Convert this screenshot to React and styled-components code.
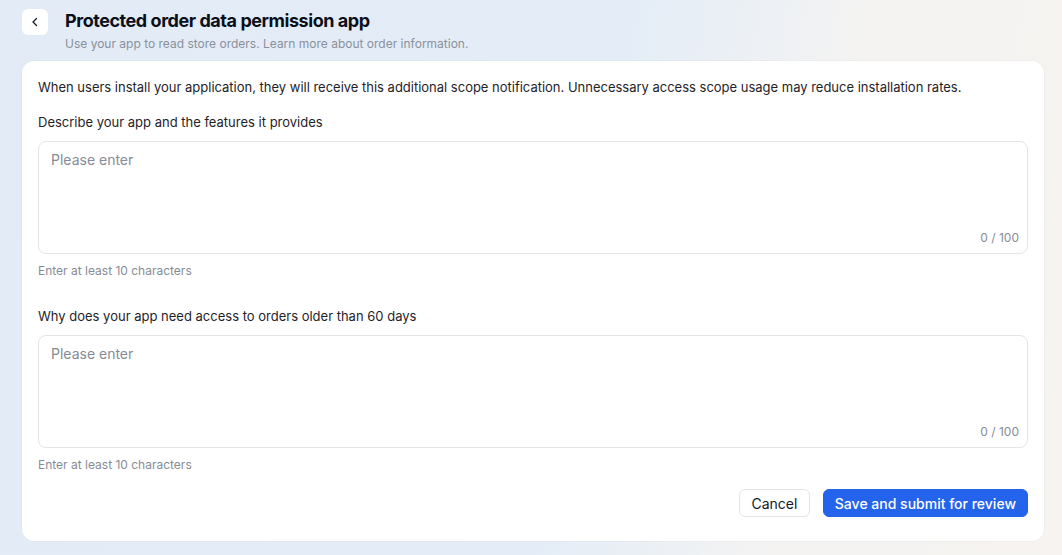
import React from 'react'
import styled, { createGlobalStyle } from 'styled-components'

const GlobalStyle = createGlobalStyle`
  html, body {
    margin: 0;
    padding: 0;
  }
  body {
    font-family: Inter, "Noto Sans", sans-serif;
    color: #111827;
    background: linear-gradient(100deg, #e2ebf6 0%, #e4edf7 55%, #f4f3f2 75%, #f6f3f0 100%);
    min-height: 555px;
  }
`

const Page = styled.div`
  padding: 9px 18px 14px 22px;
  min-height: 555px;
  box-sizing: border-box;
`

const Header = styled.div`
  display: flex;
  align-items: flex-start;
  gap: 17px;
  height: 52px;
`

const BackButton = styled.button`
  width: 26px;
  height: 26px;
  border: none;
  border-radius: 6px;
  background: #ffffff;
  display: flex;
  align-items: center;
  justify-content: center;
  padding: 0;
  cursor: pointer;
  color: #111827;
`

const TitleBlock = styled.div`
  display: flex;
  flex-direction: column;
`

const Title = styled.h1`
  margin: 0;
  font-size: 18px;
  line-height: 24px;
  font-weight: 700;
  letter-spacing: -0.45px;
  color: #0b0f19;
`

const Subtitle = styled.div`
  font-size: 12px;
  line-height: 22px;
  color: #8b919c;
`

const Card = styled.div`
  background: #ffffff;
  border-radius: 12px;
  padding: 16px 16px 24px 16px;
  display: flex;
  flex-direction: column;
  box-shadow: 0 0 0 1px rgba(0, 0, 0, 0.02);
`

const Notice = styled.p`
  margin: 0;
  font-size: 13px;
  line-height: 20px;
  letter-spacing: -0.01px;
  color: #1f2329;
`

const Label = styled.label`
  display: block;
  font-size: 13px;
  line-height: 20px;
  color: #1f2329;
  margin-top: ${p => p.$top}px;
  margin-bottom: 9px;
`

const Field = styled.div`
  position: relative;
  height: 113px;
  border: 1px solid #e3e5e8;
  border-radius: 8px;
  box-sizing: border-box;
`

const TextArea = styled.textarea`
  width: 100%;
  height: 100%;
  box-sizing: border-box;
  border: none;
  outline: none;
  resize: none;
  background: transparent;
  padding: 8px 12px;
  font-family: Inter, "Noto Sans", sans-serif;
  font-size: 14px;
  line-height: 20px;
  color: #111827;
  &::placeholder {
    color: #868c96;
  }
`

const Counter = styled.span`
  position: absolute;
  right: 8px;
  bottom: 8px;
  font-size: 12px;
  color: #868c96;
`

const Hint = styled.div`
  font-size: 12px;
  line-height: 18px;
  color: #868c96;
  margin-top: 8px;
`

const Actions = styled.div`
  display: flex;
  justify-content: flex-end;
  gap: 13px;
  margin-top: 15px;
`

const Button = styled.button`
  height: 28px;
  padding: 0 ${p => (p.$primary ? 11 : 11.5)}px;
  border-radius: 6px;
  font-family: Inter, "Noto Sans", sans-serif;
  font-size: 14px;
  font-weight: ${p => (p.$primary ? 500 : 400)};
  cursor: pointer;
  border: 1px solid ${p => (p.$primary ? '#2463eb' : '#e3e5e8')};
  background: ${p => (p.$primary ? '#2463eb' : '#ffffff')};
  color: ${p => (p.$primary ? '#ffffff' : '#111827')};
`

const ChevronLeft = () => (
  <svg width="12" height="12" viewBox="0 0 24 24" fill="none" stroke="currentColor" strokeWidth="2.6" strokeLinecap="round" strokeLinejoin="round">
    <path d="M15 5l-7 7 7 7" />
  </svg>
)

const TextField = ({ label, top }) => (
  <>
    <Label $top={top}>{label}</Label>
    <Field>
      <TextArea placeholder="Please enter" maxLength={100} />
      <Counter>0 / 100</Counter>
    </Field>
    <Hint>Enter at least 10 characters</Hint>
  </>
)

const App = () => (
  <Page>
    <GlobalStyle />
    <Header>
      <BackButton aria-label="Back">
        <ChevronLeft />
      </BackButton>
      <TitleBlock>
        <Title>Protected order data permission app</Title>
        <Subtitle>Use your app to read store orders. Learn more about order information.</Subtitle>
      </TitleBlock>
    </Header>
    <Card>
      <Notice>
        When users install your application, they will receive this additional scope notification. Unnecessary access scope usage may reduce installation rates.
      </Notice>
      <TextField label="Describe your app and the features it provides" top={15} />
      <TextField label="Why does your app need access to orders older than 60 days" top={26} />
      <Actions>
        <Button>Cancel</Button>
        <Button $primary>Save and submit for review</Button>
      </Actions>
    </Card>
  </Page>
)

export default App
